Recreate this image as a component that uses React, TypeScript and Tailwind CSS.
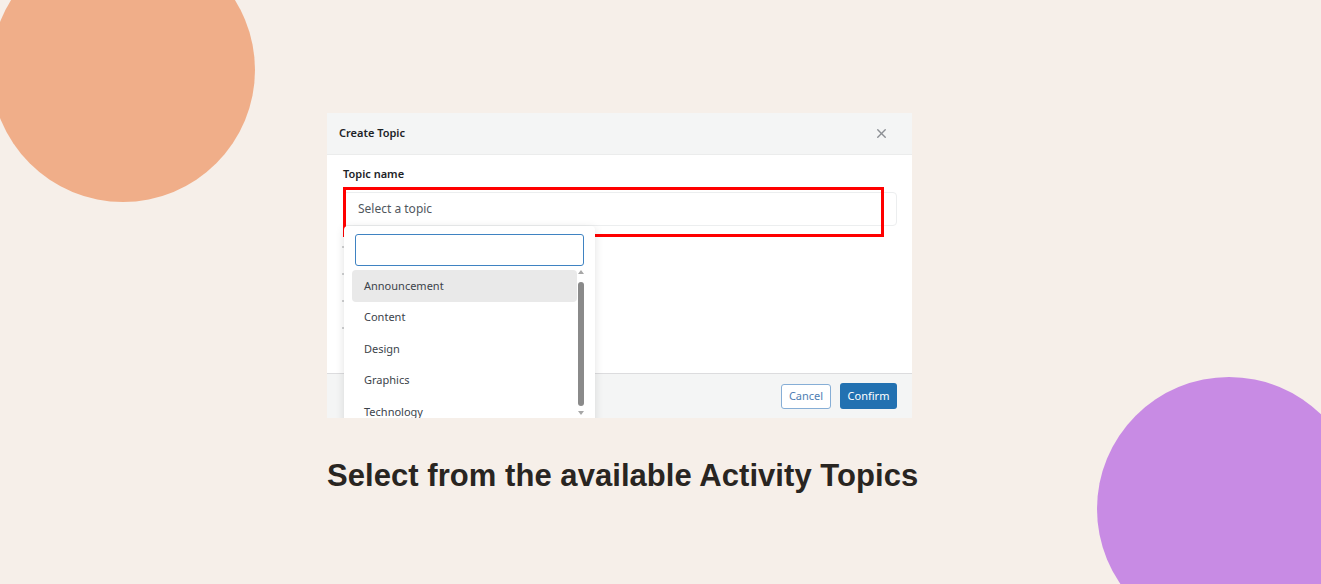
import { X } from "lucide-react";

const topics = ["Announcement", "Content", "Design", "Graphics", "Technology"];

export default function App() {
  return (
    <div className="relative w-[1321px] h-[584px] overflow-hidden bg-[#f6efe9] font-['Liberation_Sans',Arial,sans-serif]">
      {/* decorative circles */}
      <div className="absolute left-[-9px] top-[-62px] w-[264px] h-[264px] rounded-full bg-[#f0ae89]" />
      <div className="absolute left-[1097px] top-[377px] w-[264px] h-[264px] rounded-full bg-[#c88be4]" />

      <div className="relative flex flex-col items-start pl-[327px] pt-[113px]">
        {/* dialog screenshot */}
        <div className="relative w-[585px] h-[305px] overflow-hidden bg-white flex flex-col font-['Noto_Sans','Open_Sans',sans-serif]">
          <div className="h-[42px] shrink-0 flex items-center justify-between pl-[12px] pr-[23px] bg-[#f4f5f5] border-b border-[#ebecec]">
            <span className="text-[11px] font-semibold text-[#1d2327]">Create Topic</span>
            <X className="size-[15px] text-[#8c8f94]" strokeWidth={2.25} />
          </div>

          <div className="flex-1 px-[16px] pt-[10px] relative">
            <div className="text-[11px] font-semibold text-[#1d2327] leading-[18px]">Topic name</div>
            <div className="mt-[9px] h-[34px] w-[554px] rounded-[4px] border border-[#eceeef] flex items-center pl-[14px] text-[12px] text-[#50575e]">
              Select a topic
            </div>
            {/* fields hidden behind the open dropdown */}
            <div className="mt-[20px] flex flex-col gap-[25px] -ml-[1px]">
              <div className="w-[4px] h-[2px] bg-[#d0d1d3]" />
              <div className="w-[4px] h-[2px] bg-[#d0d1d3]" />
              <div className="w-[4px] h-[2px] bg-[#d0d1d3]" />
              <div className="w-[4px] h-[2px] bg-[#d0d1d3]" />
            </div>
          </div>

          <div className="h-[45px] shrink-0 flex items-center justify-end gap-[9px] pr-[15px] bg-[#f4f5f5] border-t border-[#dcdcde]">
            <button className="h-[25px] w-[50px] rounded-[3px] border border-[#86aed6] bg-white text-[11px] text-[#4f7eb3]">
              Cancel
            </button>
            <button className="h-[26px] w-[57px] rounded-[3px] bg-[#2271b1] text-[11px] text-white">
              Confirm
            </button>
          </div>

          {/* red highlight */}
          <div className="absolute left-[16px] top-[74px] w-[541px] h-[50px] border-[3px] border-[#ff0000]" />

          {/* dropdown */}
          <div className="absolute left-[17px] top-[113px] w-[251px] h-[230px] bg-white rounded-[4px] shadow-[0_2px_10px_rgba(0,0,0,0.12)] pt-[8px]">
            <div className="mx-[11px] h-[32px] w-[229px] rounded-[3px] border-[1.5px] border-[#3f83c2] bg-white" />
            <div className="relative mt-[4px] flex">
              <div className="flex flex-col pl-[8px] w-[233px]">
                {topics.map((t, i) => (
                  <div
                    key={t}
                    className={`h-[31.5px] flex items-center pl-[12px] rounded-[4px] text-[11px] text-[#3c434a] ${i === 0 ? "bg-[#e9e9e9]" : ""}`}
                  >
                    {t}
                  </div>
                ))}
              </div>
              <div className="relative w-[7px] h-[148px] ml-[1px]">
                <span className="absolute left-0 top-[0px] w-0 h-0 border-l-[3px] border-r-[3px] border-b-[4px] border-l-transparent border-r-transparent border-b-[#a7a7a7]" />
                <div className="absolute left-0 top-[12px] w-[6px] h-[124px] rounded-full bg-[#8a8a8a]" />
                <span className="absolute left-0 top-[141px] w-0 h-0 border-l-[3px] border-r-[3px] border-t-[4px] border-l-transparent border-r-transparent border-t-[#a7a7a7]" />
              </div>
            </div>
          </div>
        </div>

        <h1 className="mt-[39px] text-[31px] font-bold text-[#292521] leading-[38px] tracking-[0.05px]">
          Select from the available Activity Topics
        </h1>
      </div>
    </div>
  );
}
